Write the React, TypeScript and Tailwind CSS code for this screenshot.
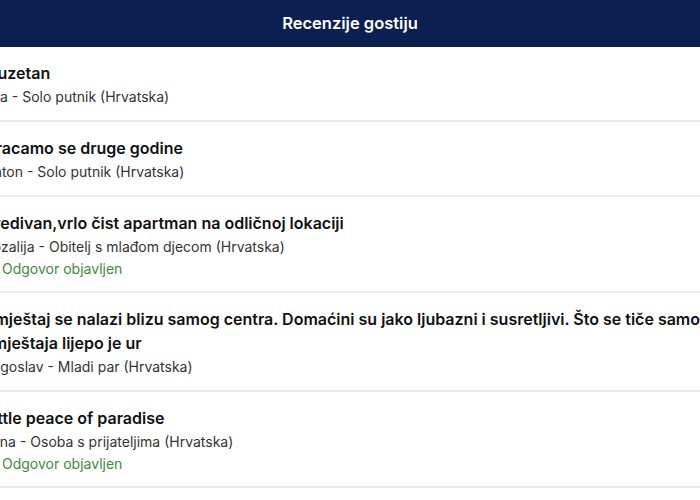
import { Check } from "lucide-react";

const reviews = [
  { id: 1, title: "Izuzetan", author: "Mia - Solo putnik (Hrvatska)", replied: false },
  { id: 2, title: "Vracamo se druge godine", author: "Anton - Solo putnik (Hrvatska)", replied: false },
  {
    id: 3,
    title: "Predivan,vrlo čist apartman na odličnoj lokaciji",
    author: "Rozalija - Obitelj s mlađom djecom (Hrvatska)",
    replied: true,
  },
  {
    id: 4,
    title:
      "Smještaj se nalazi blizu samog centra. Domaćini su jako ljubazni i susretljivi. Što se tiče samog smještaja lijepo je ur",
    author: "Jugoslav - Mladi par (Hrvatska)",
    replied: false,
  },
  { id: 5, title: "Little peace of paradise", author: "Jana - Osoba s prijateljima (Hrvatska)", replied: true },
];

const App = () => {
  return (
    <div className="w-[700px] h-[500px] overflow-hidden bg-white font-['Inter',sans-serif]">
      {/* Header */}
      <div className="h-[47px] bg-[#0b1f50] flex items-center justify-center">
        <h1 className="text-white text-[16.5px] font-semibold">Recenzije gostiju</h1>
      </div>

      {/* Review list */}
      <div className="-ml-[16px] w-[752px]">
        {reviews.map((r) => (
          <div key={r.id} className="pt-[14px] pb-[12px] border-b-2 border-[#ebebeb]">
            <p className="text-[16px] leading-[24px] font-semibold text-[#111] pr-[10px]">{r.title}</p>
            <p className="text-[14px] leading-[23px] text-[#333]">{r.author}</p>
            {r.replied && (
              <div className="flex items-center gap-[5px] text-[14px] leading-[21px] text-[#3c8a3c]">
                <Check size={13} strokeWidth={2.5} />
                <span>Odgovor objavljen</span>
              </div>
            )}
          </div>
        ))}
      </div>
    </div>
  );
};

export default App;
